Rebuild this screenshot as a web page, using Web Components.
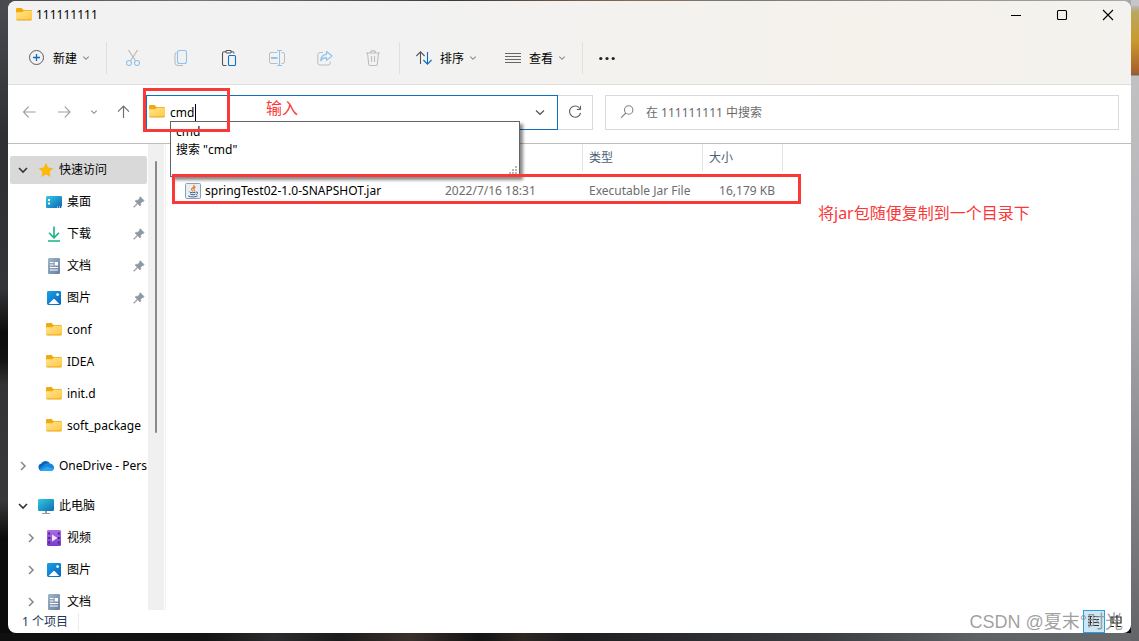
<!DOCTYPE html>
<html lang="zh-CN">
<head>
<meta charset="utf-8">
<title>111111111</title>
<style>
html { height: 100%; }
body {
  margin: 0; min-height: 100vh; box-sizing: border-box; padding: 1px 8px 8px; display: flex;
  font: 12px/18px "Noto Sans", "Noto Sans CJK SC", sans-serif; color: #000;
  background:
    linear-gradient(#b8b8ba, #b9a860 6px, #c99a2c 35px, #a8602a 66px, #77654f 69px, transparent 70px) right 0 top 6px / 8px 78px no-repeat,
    linear-gradient(#c6c6c8, #b4b4b8 40%, #7c7e82 80%, #626467) right / 8px 100% no-repeat,
    linear-gradient(90deg, #101010, #131313 18%, #2b2b2e 24%, #1c1b1b 30%, #3a302b 36%, #131313 42%, #2e2722 46%, #1c1c1e 50%, #3a3c40 72%, #5e6265 86%, #66686b) bottom / 100% 8px no-repeat,
    linear-gradient(90deg, #48494d, #77777a 18%, #3d3a3c 40%, #8c6c50 56%, #77777a 64%, #aaa) top / 100% 8px no-repeat,
    linear-gradient(#4a4b50, #2e2f33 22%, #333437 45%, #0c0c0c 52%, #111 56%, #333336 60%, #38383b 78%, #0b0b0b 84%);
}
file-explorer { flex: 1; }
</style>
</head>
<body>
<file-explorer></file-explorer>

<script>
const FOLDER = '<path d="M0 2.2Q0 1 1.2 1H5.6L7.4 3H14.8Q16 3 16 4.2V8H0Z" fill="#f2a90c"/><path d="M0 5.2H6.2L8 3.8H15Q16 3.8 16 4.8V12Q16 13 15 13H1Q0 13 0 12Z" fill="url(#f)"/><path d="M.3 12.5Q.6 13 1.2 13H14.8Q15.5 13 15.8 12.4" fill="none" stroke="#e6a11d" stroke-width="1"/><defs><linearGradient id="f" x1="0" y1="0" x2="1" y2="1"><stop stop-color="#ffe596"/><stop offset="1" stop-color="#ffc83a"/></linearGradient></defs>';
const PICTURE = '<defs><linearGradient id="p" x2="1" y2="1"><stop stop-color="#1ba0e6"/><stop offset="1" stop-color="#0566c0"/></linearGradient></defs><rect x="1" y="1" width="14" height="14" rx="1.4" fill="url(#p)"/><path d="M2.6 14L7.2 9.3Q8 8.5 8.8 9.3L13.4 14Z" fill="#fff"/><circle cx="11.6" cy="4.6" r="1.4" fill="#fff"/>';
const ICONS = {
  folder: FOLDER,
  add: '<g fill="none"><circle cx="7.5" cy="7.5" r="7" stroke="#5c5c5c"/><path d="M7.5 4V11M4 7.5H11" stroke="#0a6cc0" stroke-width="1.3"/></g>',
  down: '<path d="M1.3 2.6L4 5.3L6.7 2.6" fill="none" stroke="#8a8a8a" stroke-width="1.1"/>',
  cut: '<g fill="none" stroke-width="1.1"><path d="M3.4 0L10.6 11M12.6 0L5.4 11" stroke="#b8b8b8"/><circle cx="4" cy="13" r="2.5" stroke="#8fc3ec"/><circle cx="12" cy="13" r="2.5" stroke="#8fc3ec"/></g>',
  copy: '<g fill="none" stroke-width="1.1"><path d="M3.5 2.5Q2 3 2 5V12Q2 15.5 5.5 15.5H10" stroke="#bdbdbd"/><rect x="4.5" y=".5" width="9" height="13" rx="2" stroke="#8fc3ec"/></g>',
  paste: '<g fill="none" stroke-width="1.1"><path d="M5 1.8H3Q1.5 1.8 1.5 3.3V14Q1.5 15.5 3 15.5H5.5M10 1.8H11.5Q13 1.8 13 3.5" stroke="#555"/><rect x="4.8" y=".5" width="5.4" height="2.5" rx="1.2" stroke="#555"/><rect x="7.5" y="5.5" width="7" height="10" rx="1.2" stroke="#0a72cc"/></g>',
  rename: '<g fill="none"><path d="M8.5 2.5H2Q.5 2.5 .5 4V11.5Q.5 13.5 2 13.5H8.5M12.5 2.5H14Q15.5 2.5 15.5 4V11.5Q15.5 13.5 14 13.5H12.5" stroke="#bdbdbd"/><path d="M10.5 .5V15.5M8 .5H13M8 15.5H13" stroke="#8fc3ec"/><path d="M2 8H8.5" stroke="#8fc3ec" stroke-width="2"/></g>',
  share: '<g fill="none" stroke-linejoin="round"><path d="M6 2.5H3Q.8 2.5 .8 4.7V13Q.8 15 3 15H11Q13.3 15 13.3 13V11.5" stroke="#bdbdbd"/><path d="M9.5 1.5L15 6L9.5 10.4V7.7Q5.7 7.6 3.7 10.7Q4 5 9.5 4.3Z" stroke="#8fc3ec" stroke-width="1.2"/></g>',
  trash: '<g fill="none" stroke="#bdbdbd" stroke-width="1.1"><path d="M1 3H15M5.5 2.8Q5.5 .6 8 .6T10.5 2.8M2.5 3L3.7 14Q3.9 15.5 5 15.5H11Q12.1 15.5 12.3 14L13.5 3M6.5 6V12M9.5 6V12"/></g>',
  sort: '<g fill="none" stroke-width="1.1"><path d="M4.5 14V2M.4 6L4.5 1.8L8.6 6" stroke="#555"/><path d="M11.5 2V14M7.4 10L11.5 14.2L15.6 10" stroke="#0a6cc0"/></g>',
  view: '<path d="M0 3.5H16M0 6.5H16M0 9.5H16M0 12.5H16" stroke="#666"/>',
  more: '<g fill="#222"><circle cx="1.8" cy="8.5" r="1.6"/><circle cx="8" cy="8.5" r="1.6"/><circle cx="14.2" cy="8.5" r="1.6"/></g>',
  min: '<path d="M3 8.5H13" stroke="#000"/>',
  max: '<rect x="3.5" y="3.5" width="9" height="9" rx="1" fill="none" stroke="#000" stroke-width="1.1"/>',
  close: '<path d="M3 3L13 13M13 3L3 13" stroke="#000" stroke-width="1.1"/>',
  back: '<path d="M13.5 8H1.5M6.7 2.7L1.5 8L6.7 13.3" fill="none" stroke="#a0a0a0" stroke-width="1.2"/>',
  forward: '<path d="M2 8H14M8.8 2.7L14 8L8.8 13.3" fill="none" stroke="#a0a0a0" stroke-width="1.2"/>',
  up: '<path d="M7.5 14V2.2M2 7.6L7.5 2L13 7.6" fill="none" stroke="#707070" stroke-width="1.2"/>',
  expand: '<path d="M4 6.5L8 10.3L12 6.5" fill="none" stroke="#555" stroke-width="1.2"/>',
  refresh: '<path d="M13 4.8A5.6 5.6 0 1 0 13.6 9M13.5 1.8V5.5H9.8" fill="none" stroke="#666" stroke-width="1.1"/>',
  search: '<g fill="none" stroke="#85808a" stroke-width="1.1"><circle cx="9.7" cy="6" r="4.2"/><path d="M6.8 9L2 13.8"/></g>',
  open: '<path d="M2 4L6 8L10 4" fill="none" stroke="#333" stroke-width="1.6"/>',
  closed: '<path d="M4 2L8 6L4 10" fill="none" stroke="#888" stroke-width="1.5"/>',
  star: '<path d="M8 .8L10.2 5.6L15.4 6.2L11.6 9.8L12.6 15L8 12.4L3.4 15L4.4 9.8L.6 6.2L5.8 5.6Z" fill="#fcb90b"/>',
  desktop: '<defs><linearGradient id="d" x2="1" y2="1"><stop stop-color="#31cde0"/><stop offset="1" stop-color="#0c62b5"/></linearGradient></defs><rect y="2" width="16" height="12" rx="1.2" fill="url(#d)"/><path d="M2 5H4V7H2ZM2 8.5H4V10.5H2Z" fill="#fff"/><path d="M11 13H12M13 13H14M15 13H16" stroke="#fff"/>',
  download: '<g fill="none" stroke="#1bb28a" stroke-width="1.6"><path d="M8 .5V11.5M3 6.8L8 11.8L13 6.8M2 15H14"/></g>',
  document: '<defs><linearGradient id="g" x2="1" y2="1"><stop stop-color="#a3b6ca"/><stop offset="1" stop-color="#647f9e"/></linearGradient></defs><rect x="2" width="12" height="16" rx="1.2" fill="url(#g)"/><path d="M4 4.5H7.5M4 7H7.5M4 9.5H12M4 12H12" stroke="#fff" stroke-width="1.2"/><rect x="8.7" y="4" width="3.3" height="3.5" fill="#fff"/>',
  picture: PICTURE,
  cloud: '<path d="M3.6 12.8A3.6 3.6 0 0 1 3 5.8A5.3 5.3 0 0 1 12.2 5.5Q9 5 3.6 12.8Z" fill="#0a64bd"/><path d="M1 11L5 7.4Q8.5 4.5 12.2 5.6Q15.8 6.6 16 9.4Q15.8 12.9 12.6 13H3.6Q1.8 12.8 1 11Z" fill="#1687dc"/><path d="M2 12.3L9 8.6L15.6 11Q14.6 13 12.6 13H3.6Q2.7 13 2 12.3Z" fill="#2ba8ee"/>',
  computer: '<defs><linearGradient id="c" x2="1" y2="1"><stop stop-color="#32ccdc"/><stop offset="1" stop-color="#0c6cb8"/></linearGradient></defs><rect y="1" width="16" height="12" rx="1.2" fill="url(#c)"/><path d="M7 13H9V15H12V16H4V15H7Z" fill="#8f9ba5"/>',
  video: '<defs><linearGradient id="v" x2="0" y2="1"><stop stop-color="#b16be8"/><stop offset="1" stop-color="#7a3cc8"/></linearGradient></defs><rect x="1" width="14" height="16" rx="1.2" fill="url(#v)"/><path d="M3.2 2.5V14M12.8 2.5V14" stroke="#41207a" stroke-width="1.8" stroke-dasharray="2 2.5"/><path d="M6 4.5L11.5 8L6 11.5Z" fill="#f2e8fb"/>',
  pin: '<path d="M7.3 .8L11.2 4.7L10.2 5.6L9.6 5.4L7.6 7.4Q8 9 7 10L4.8 7.8L1 11.4L.6 11L4.2 7.2L2 5Q3.2 4 4.7 4.4L6.6 2.4L6.4 1.7Z" fill="#8e99a3" stroke="#8e99a3" stroke-width=".6"/>',
  jar: '<rect x=".5" y=".5" width="15" height="15" rx="1" fill="#e9eef3" stroke="#8ba0b4"/><path d="M8.7 1.7Q10 3.6 7.6 5T8 8.4M10.6 4Q8 5.3 9 6.3T8.8 8.3" fill="none" stroke="#e0731d" stroke-width="1.1"/><path d="M4.3 8.6Q4 9.6 7.6 9.6T10.6 9M5 10.7Q5.5 11.7 8 11.7T10.4 11M3.2 13Q5 14 8.3 13.9T12.6 12.8M11 9Q13.4 9 12.4 10.6T10.8 11.6" fill="none" stroke="#3e688f"/>',
  details: '<path d="M2 2.5H6M2 5.5H6M2 8.5H6M2 11.5H6M7 2.5H13M7 5.5H13M7 8.5H13M7 11.5H13M4.5 2V12" stroke="#333"/>',
  large: '<path d="M3 3H13V9H3ZM2 12.5H6M8 12.5H13M5 3V9M9 1V13" fill="none" stroke="#222" stroke-width="1.2"/>'
};

const define = (tag, html, setup) => customElements.define(tag, class extends HTMLElement {
  constructor() {
    super();
    const root = this.attachShadow({ mode: 'open' });
    const t = document.createElement('template');
    t.innerHTML = `<style>*{box-sizing:border-box}button{font:inherit;color:inherit;background:none;border:0;padding:0;margin:0}</style>${html}`;
    root.append(t.content.cloneNode(true));
  }
  connectedCallback() { if (setup) setup(this, this.shadowRoot); }
});

/* Inline icon: name picks the drawing, size its box in pixels */
define('ui-icon', '<style>:host{display:block;flex:none;line-height:0}svg{display:block}</style><div></div>', (el, root) => {
  const name = el.getAttribute('name');
  const size = { down: 8, open: 12, closed: 12, pin: 12 }[name] || 16;
  root.querySelector('div').innerHTML =
    `<svg width="${size}" height="${size}" viewBox="0 0 ${size} ${size}" aria-hidden="true">${ICONS[name] || ''}</svg>`;
});

define('title-bar', `<style>
:host{display:flex;align-items:center;height:28px;padding-left:8px}
span{flex:1;padding-left:4px}
button{width:46px;height:28px;display:grid;place-items:center}
</style><ui-icon name="folder"></ui-icon><span><slot></slot></span>
<button aria-label="最小化"><ui-icon name="min"></ui-icon></button>
<button aria-label="最大化"><ui-icon name="max"></ui-icon></button>
<button aria-label="关闭"><ui-icon name="close"></ui-icon></button>`);

define('menu-button', `<style>
:host{display:block}
button{display:flex;align-items:center;height:32px;padding:0 14px}
span{margin:0 5px 0 8px;padding-top:2px}
</style><button aria-haspopup="menu"><ui-icon></ui-icon><span><slot></slot></span><ui-icon name="down"></ui-icon></button>`,
(el, root) => { const i = root.querySelector('ui-icon'); i.setAttribute('name', el.getAttribute('icon')); i.replaceWith(i.cloneNode()); });

define('command-bar', `<style>
:host{display:flex;align-items:center;height:56px;padding:2px 0 0 7px;border-bottom:1px solid #dedddb;box-sizing:border-box}
i{width:1px;height:32px;background:#e0e0e0;margin:0 2px}
.tool{width:48px;height:32px;display:grid;place-items:center}
.more{padding:0 14px}
</style>
<menu-button icon="add">新建</menu-button><i></i>
<button class="tool" aria-label="剪切"><ui-icon name="cut"></ui-icon></button>
<button class="tool" aria-label="复制"><ui-icon name="copy"></ui-icon></button>
<button class="tool" aria-label="粘贴"><ui-icon name="paste"></ui-icon></button>
<button class="tool" aria-label="重命名"><ui-icon name="rename"></ui-icon></button>
<button class="tool" aria-label="共享"><ui-icon name="share"></ui-icon></button>
<button class="tool" aria-label="删除"><ui-icon name="trash"></ui-icon></button><i></i>
<menu-button icon="sort">排序</menu-button><menu-button icon="view">查看</menu-button><i></i>
<button class="more" aria-label="更多"><ui-icon name="more"></ui-icon></button>`);

define('suggest-list', `<style>
:host{position:absolute;z-index:2;left:23px;top:25px;width:350px;height:56px;border:1px solid #646464;background:#fff;padding:1px 0 0 5px;box-shadow:3px 3px 3px #0007;box-sizing:border-box}
ul{margin:0;padding:0;list-style:none}
svg{position:absolute;right:1px;bottom:1px}
</style><ul><li>cmd</li><li>搜索 "cmd"</li></ul>
<svg width="10" height="10" fill="#b8b8b8"><path d="M7 1H9V3H7ZM4 4H6V6H4ZM7 4H9V6H7ZM1 7H3V9H1ZM4 7H6V9H4ZM7 7H9V9H7Z"/></svg>`);

define('address-row', `<style>
:host{display:flex;align-items:center;gap:12px;height:59px;padding:0 12px 4px 14px;border-bottom:1px solid #bdbdbd;background:#fff;box-sizing:border-box}
nav{display:flex;align-items:center;gap:18px;padding-right:2px}
.path{flex:447 1 0;display:flex;height:35px}
.address{position:relative;flex:1;display:flex;align-items:center;border:1px solid #0f70c0;padding-left:2px;min-width:0}
input{font:inherit;color:#000;border:0;outline:0;padding:2px 0 0;background:none;min-width:0}
.address input{width:25px;margin-left:5px}
.caret{width:1px;height:17px;background:#000}
.expand{margin-left:auto;padding-right:9px}
.refresh{width:35px;border:1px solid #d9d9d9;border-left:0;display:grid;place-items:center}
.search{flex:499 1 0;display:flex;align-items:center;height:35px;border:1px solid #d9d9d9;padding-left:13px}
.search input{flex:1;margin-left:11px}
input::placeholder{color:#6a6a6a;opacity:1}
.mark{position:absolute;z-index:3;left:-4px;top:-8px;width:87px;height:44px;border:3px solid #fb3838;pointer-events:none}
.note{position:absolute;left:119px;top:0;font-size:16px;line-height:24px;color:#fb3838}
</style>
<nav aria-label="导航"><button aria-label="后退"><ui-icon name="back"></ui-icon></button><button aria-label="前进"><ui-icon name="forward"></ui-icon></button><button aria-label="最近"><ui-icon name="down"></ui-icon></button><button aria-label="向上"><ui-icon name="up"></ui-icon></button></nav>
<div class="path"><div class="address"><ui-icon name="folder"></ui-icon><input aria-label="地址" value="cmd"><span class="caret"></span>
<button class="expand" aria-label="展开"><ui-icon name="expand"></ui-icon></button>
<suggest-list></suggest-list><div class="mark"></div><span class="note">输入</span></div>
<button class="refresh" aria-label="刷新"><ui-icon name="refresh"></ui-icon></button></div>
<label class="search"><ui-icon name="search"></ui-icon><input type="text" aria-label="搜索" placeholder="在 111111111 中搜索"></label>`);

define('nav-item', `<style>
:host{display:block;padding:2px 0}
:host([gap]){margin-top:8px}
a{display:flex;align-items:center;height:28px;padding-left:7px;color:inherit;text-decoration:none;border-radius:2px;overflow:hidden}
:host([child]) a{padding-left:15px}
:host([selected]) a{background:#d9d9d9}
.arrow{width:12px;margin-right:9px;flex:none}
.text{flex:1;padding-left:5px;white-space:nowrap;overflow:hidden}
.pin{margin-right:2px}
</style><a href="#"><span class="arrow"></span><span class="icon"></span><span class="text"><slot></slot></span></a>`,
(el, root) => {
  const icon = n => { const i = document.createElement('ui-icon'); i.setAttribute('name', n); return i; };
  if (el.hasAttribute('arrow')) root.querySelector('.arrow').replaceChildren(icon(el.getAttribute('arrow')));
  root.querySelector('.icon').replaceChildren(icon(el.getAttribute('icon')));
  if (el.hasAttribute('pinned')) { const p = icon('pin'); p.className = 'pin'; root.querySelector('a').append(p); }
});

define('nav-pane', `<style>
:host{display:flex;width:158px;flex:none;border-right:1px solid #f0f0f0;overflow:hidden;contain:size}
nav{width:140px;padding:10px 1px 0 2px}
.track{width:16px;background:#f0f0f0;padding:17px 0 0 7px}
.thumb{width:2px;height:272px;background:#8a8a8a;border-radius:1px}
</style><nav aria-label="文件夹">
<nav-item icon="star" arrow="open" selected>快速访问</nav-item>
<nav-item icon="desktop" child pinned>桌面</nav-item>
<nav-item icon="download" child pinned>下载</nav-item>
<nav-item icon="document" child pinned>文档</nav-item>
<nav-item icon="picture" child pinned>图片</nav-item>
<nav-item icon="folder" child>conf</nav-item>
<nav-item icon="folder" child>IDEA</nav-item>
<nav-item icon="folder" child>init.d</nav-item>
<nav-item icon="folder" child>soft_package</nav-item>
<nav-item icon="cloud" arrow="closed" gap>OneDrive - Pers</nav-item>
<nav-item icon="computer" arrow="open" gap>此电脑</nav-item>
<nav-item icon="video" arrow="closed" child>视频</nav-item>
<nav-item icon="picture" arrow="closed" child>图片</nav-item>
<nav-item icon="document" arrow="closed" child>文档</nav-item>
</nav><div class="track"><div class="thumb"></div></div>`);

define('file-list', `<style>
:host{display:block;flex:1;position:relative}
table{border-collapse:separate;border-spacing:0;table-layout:fixed;width:617px}
th{height:35px;padding:0 6px 8px;text-align:left;font-weight:400;color:#4c607a;background:linear-gradient(#e5e5e5,#e5e5e5) right top/1px 27px no-repeat}
td{height:22px;padding:2px 8px 0 6px;color:#6d6d6d;white-space:nowrap}
.name{color:#000;padding-left:19px}
.name div{display:flex;align-items:center;gap:4px}
.size{text-align:right}
.mark{position:absolute;left:6px;top:30px;width:629px;height:30px;border:3px solid #fb3838;pointer-events:none;z-index:3}
.note{position:absolute;left:652px;top:57px;font-size:16px;line-height:24px;color:#fb3838;white-space:nowrap}
</style><table><colgroup><col style="width:273px"><col style="width:144px"><col style="width:120px"><col style="width:80px"></colgroup>
<thead><tr><th aria-label="名称"></th><th aria-label="修改日期"></th><th>类型</th><th>大小</th></tr></thead>
<tbody><tr><td class="name"><div><ui-icon name="jar"></ui-icon>springTest02-1.0-SNAPSHOT.jar</div></td><td>2022/7/16 18:31</td><td>Executable Jar File</td><td class="size">16,179 KB</td></tr></tbody></table>
<div class="mark"></div><span class="note">将jar包随便复制到一个目录下</span>`);

define('status-bar', `<style>
:host{display:flex;align-items:center;height:23px;padding:0 4px 0 14px;color:#1e395b;position:relative}
.count{padding-right:10px;border-right:1px solid #ececec;flex:none}
.views{margin-left:auto;display:flex}
button{width:22px;height:23px;display:grid;place-items:center}
.on{background:#cce8f6;border:1px solid #2a9fe0}
.water{position:absolute;right:8px;top:0;font:18px/24px "Liberation Sans","Noto Sans CJK SC",sans-serif;color:#8b8b8bd0;white-space:nowrap}
</style><span class="count"><slot></slot></span>
<div class="views"><button class="on" aria-label="详细信息"><ui-icon name="details"></ui-icon></button><button aria-label="大图标"><ui-icon name="large"></ui-icon></button></div>
<span class="water">CSDN @夏末°时光</span>`);

define('file-explorer', `<style>
:host{display:flex;flex-direction:column;background:#fff;border-radius:8px;overflow:hidden}
header{background:linear-gradient(90deg,#f2f2f2 35%,#f5f2ec 75%,#f4f2ee)}
main{flex:1;display:flex;min-height:300px}
</style><header><title-bar>111111111</title-bar><command-bar></command-bar></header>
<address-row></address-row>
<main><nav-pane></nav-pane><file-list></file-list></main>
<status-bar>1 个项目</status-bar>`);
</script>
</body>
</html>
